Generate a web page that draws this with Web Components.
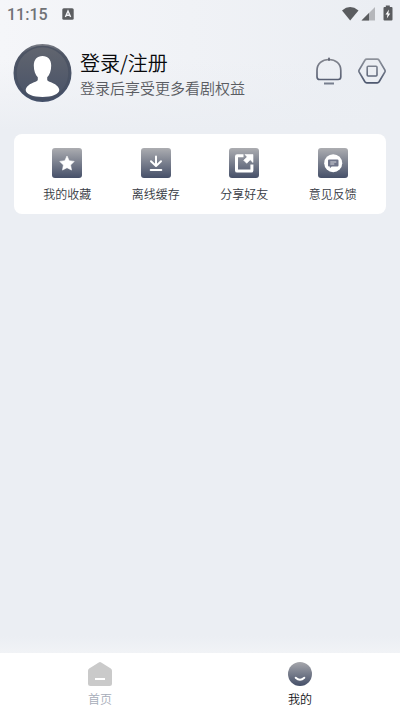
<!DOCTYPE html>
<html lang="zh-CN">
<head>
<meta charset="utf-8">
<meta name="viewport" content="width=device-width, initial-scale=1">
<title>我的</title>
<style>
  body { margin: 0; background: #ebeef3; color: #15171b; font-family: "Noto Sans CJK SC", sans-serif; font-weight: 350; }
</style>
</head>
<body>
<profile-page></profile-page>

<template id="status-bar">
  <style>
    :host { display: flex; align-items: center; height: 28px; padding: 0 7px; color: #707276; }
    time { font-family: Roboto, sans-serif; font-size: 16px; line-height: 20px; font-weight: 500; margin-right: 14px; padding-top: 2px; }
    svg { display: block; }
    .system { display: flex; align-items: center; margin-left: auto; }
  </style>
  <time>11:15</time>
  <svg width="12" height="12" viewBox="0 0 12 12" aria-hidden="true"><rect x=".3" y=".3" width="11.4" height="11.4" rx="1.5" fill="#5c5e61"/><path d="M3.4 9 6 3l2.6 6M4.3 7.2h3.4" fill="none" stroke="#f3f4f7" stroke-width="1.4"/></svg>
  <div class="system">
    <svg width="52" height="18" viewBox="0 0 52 18" aria-hidden="true">
      <path d="M1 5.500Q9 -1.400 17.500 5.500L9.200 15.500Z" fill="#5a5c5f"/>
      <path d="M34 2v13.500H20.500Z" fill="#b5b7bb"/><path d="M28 8V15.500h-7.500Z" fill="#5a5c5f"/>
      <path d="M44.800 2V.500h4V2h1.700q1 0 1 1v11.500q0 1-1 1h-7q-1 0-1-1V3q0-1 1-1Z" fill="#5a5c5f"/>
      <path d="M48 4.500 44.500 9.500h2l-.700 4 3.500-5h-2Z" fill="#fff"/>
    </svg>
  </div>
</template>

<template id="user-header">
  <style>
    :host { display: flex; align-items: center; gap: 8px; padding: 15px 14px 31px 13px; }
    svg { display: block; }
    .login { all: unset; flex: 1; min-width: 0; display: flex; align-items: center; gap: 8px; cursor: pointer; }
    .text { display: flex; flex-direction: column; padding-top: 2px; }
    ::slotted([slot=title]) { font-size: 20px; line-height: 28px; color: #08090b; }
    ::slotted([slot=hint]) { font-size: 15px; line-height: 22px; color: #5a5c62; }
    .actions { display: flex; gap: 15px; padding-bottom: 4px; }
    .actions button { all: unset; cursor: pointer; }
  </style>
  <button class="login" type="button">
    <svg width="59" height="60" viewBox="0 0 59 60" aria-hidden="true">
      <defs><linearGradient id="a" x2="0" y2="1"><stop stop-color="#62666f"/><stop offset="1" stop-color="#485268"/></linearGradient>
      <linearGradient id="r" x2="0" y2="1"><stop stop-color="#777a83"/><stop offset=".15" stop-color="#505766"/><stop offset="1" stop-color="#445069"/></linearGradient></defs>
      <circle cx="29.500" cy="30" r="28" fill="url(#a)" stroke="url(#r)" stroke-width="2"/>
      <circle cx="29.500" cy="30" r="26.500" fill="none" stroke="#464e60" stroke-width="1.500" opacity=".7"/>
      <path d="M29.500 13c5.500 0 8.700 3.800 8.700 9.500 0 5.300-1.600 9.500-4 11.700v2.300c0 1.200.8 1.700 2.300 2.200 5.800 1.900 9.800 5 9.800 8.400 0 4.200-7.500 7-16.800 7s-16.800-2.800-16.800-7c0-3.400 4-6.500 9.800-8.400 1.500-.5 2.300-1 2.300-2.200v-2.300c-2.400-2.200-4-6.400-4-11.700 0-5.700 3.200-9.500 8.700-9.500Z" fill="#fff"/>
    </svg>
    <span class="text"><slot name="title"></slot><slot name="hint"></slot></span>
  </button>
  <div class="actions">
    <button type="button" aria-label="消息">
      <svg width="28" height="30" viewBox="0 0 28 30"><defs><linearGradient id="b" gradientUnits="userSpaceOnUse" x2="0" y2="30"><stop stop-color="#8b8d94"/><stop offset="1" stop-color="#4b546b"/></linearGradient></defs>
      <path d="M2 14.500C2 7.500 7.200 3.500 13.900 3.500s11.900 4 11.900 11v6.300q0 2.700-2.700 2.700H4.700Q2 23.500 2 20.800Z" fill="none" stroke="url(#b)" stroke-width="1.700"/><rect x="13" y="1.500" width="2" height="3.500" rx="1" fill="#646977"/><rect x="9" y="26.500" width="10" height="2" fill="#777e8e"/></svg>
    </button>
    <button type="button" aria-label="设置">
      <svg width="28" height="30" viewBox="0 0 28 30"><defs><linearGradient id="h" gradientUnits="userSpaceOnUse" x2="0" y2="30"><stop stop-color="#969aa1"/><stop offset="1" stop-color="#46516a"/></linearGradient></defs>
      <path d="M8.800 3.200h10.400q1.200 0 1.900 1.100l5.700 9.600q.600 1.100 0 2.200l-5.700 9.600q-.700 1.100-1.900 1.100H8.800q-1.200 0-1.900-1.100L1.200 16.100q-.600-1.100 0-2.200l5.700-9.600q.700-1.100 1.900-1.100Z" fill="none" stroke="url(#h)" stroke-width="1.700"/><rect x="9.200" y="10.200" width="9.800" height="9.800" rx="1" fill="none" stroke="url(#h)" stroke-width="1.600"/></svg>
    </button>
  </div>
</template>

<template id="action-card">
  <style>
    :host { display: grid; grid-template-columns: repeat(4, 1fr); margin: 0 14px; padding: 14px 9px 11px 9px; border-radius: 8px; background: #fff; }
  </style>
  <slot></slot>
</template>

<template id="action-item">
  <style>
    :host { display: block; }
    button { all: unset; display: flex; flex-direction: column; align-items: center; gap: 7px; width: 100%; cursor: pointer; font-size: 12px; line-height: 18px; color: #363a43; }
    svg { display: block; }
  </style>
  <button type="button">
    <svg width="30" height="30" viewBox="0 0 30 30" aria-hidden="true">
      <defs><linearGradient id="g" x2="0" y2="1"><stop stop-color="#acadb1"/><stop offset="1" stop-color="#465069"/></linearGradient></defs>
      <rect width="30" height="30" rx="3" fill="url(#g)"/>
      <g class="glyph"></g>
    </svg>
    <span><slot></slot></span>
  </button>
</template>

<template id="tab-bar">
  <style>
    :host { display: block; position: sticky; bottom: 0; margin-top: auto; }
    .fade { height: 17px; background: linear-gradient(#ebeef3, #f1f3f6); }
    nav { display: grid; grid-template-columns: 1fr 1fr; background: #fff; }
  </style>
  <div class="fade"></div>
  <nav><slot></slot></nav>
</template>

<template id="tab-item">
  <style>
    :host { display: block; color: #a6acb8; }
    :host([current]) { color: #121418; }
    a { display: flex; flex-direction: column; align-items: center; gap: 4px; padding: 9px 0 4px; color: inherit; text-decoration: none; font-size: 12px; line-height: 18px; }
    svg { display: block; }
  </style>
  <a href="#"><svg width="24" height="24" viewBox="0 0 24 24" aria-hidden="true"></svg><span><slot></slot></span></a>
</template>

<template id="profile-page">
  <style>
    :host { display: flex; flex-direction: column; min-height: 100vh; background: linear-gradient(rgba(235,238,243,0) 60px, #ebeef3 130px), linear-gradient(90deg, #f5f6f9, #ebeef3 95%); }
  </style>
  <status-bar></status-bar>
  <user-header><span slot="title">登录/注册</span><span slot="hint">登录后享受更多看剧权益</span></user-header>
  <action-card>
    <action-item icon="star">我的收藏</action-item>
    <action-item icon="download">离线缓存</action-item>
    <action-item icon="share">分享好友</action-item>
    <action-item icon="feedback">意见反馈</action-item>
  </action-card>
  <tab-bar>
    <tab-item icon="home">首页</tab-item>
    <tab-item icon="face" current>我的</tab-item>
  </tab-bar>
</template>

<script>
  const glyphs = {
    star: '<path d="m15 8 2.200 4.700 5 .700-3.600 3.600.900 5.100L15 19.700l-4.500 2.400.900-5.100-3.600-3.600 5-.700Z" fill="#fff" stroke="#fff" stroke-width=".6" stroke-linejoin="round"/>',
    download: '<path d="M15 8.500v9M10 13.200l5 4.800 5-4.800M9.700 22h10.600" fill="none" stroke="#fff" stroke-width="2" stroke-linecap="round" stroke-linejoin="round"/>',
    share: '<path d="M14.500 7.700H8.200q-.700 0-.700.700v14q0 .700.700.700h14q.700 0 .700-.700v-6" fill="none" stroke="#fff" stroke-width="3"/><path d="M16 6.500h8v8l-2.800-2.700-3.500 3.500-3-3 3.500-3.400Z" fill="#fff" stroke="#fff" stroke-width=".6" stroke-linejoin="round"/>',
    feedback: '<circle cx="15.200" cy="15.200" r="9" fill="#fff"/><path d="M11 11.500h8.500q1 0 1 1v5q0 1-1 1h-5.800l-1.800 1.700v-1.700H11q-1 0-1-1v-5q0-1 1-1Z" fill="#70758a"/><path d="M12.300 14h6M12.300 16h4" stroke="#d5d7dc" stroke-width="1"/>'
  };
  const tabIcons = {
    home: '<path d="M10.800.500q1.200-.800 2.400 0L22.800 6.500Q24 7.300 24 8.700V21.500q0 2.500-2.500 2.500h-19Q0 24 0 21.500V8.700Q0 7.300 1.200 6.500Z" fill="#cacaca"/><rect x="7" y="16" width="10" height="2" fill="#fff"/>',
    face: '<defs><linearGradient id="f" x2="0" y2="1"><stop stop-color="#a6a7ac"/><stop offset="1" stop-color="#454f68"/></linearGradient></defs><circle cx="12" cy="12" r="12" fill="url(#f)"/><path d="M7.700 15.700q4.300 4.100 8.600 0" fill="none" stroke="#fff" stroke-width="2" stroke-linecap="round"/>'
  };
  class TemplateElement extends HTMLElement {
    constructor() {
      super();
      this.attachShadow({ mode: 'open' }).append(document.getElementById(this.localName).content.cloneNode(true));
    }
  }
  class ActionItem extends TemplateElement {
    connectedCallback() { this.shadowRoot.querySelector('.glyph').innerHTML = glyphs[this.getAttribute('icon')]; }
  }
  class TabItem extends TemplateElement {
    connectedCallback() {
      this.shadowRoot.querySelector('svg').innerHTML = tabIcons[this.getAttribute('icon')];
      if (this.hasAttribute('current')) this.shadowRoot.querySelector('a').setAttribute('aria-current', 'page');
    }
  }
  customElements.define('status-bar', class extends TemplateElement {});
  customElements.define('user-header', class extends TemplateElement {});
  customElements.define('action-card', class extends TemplateElement {});
  customElements.define('tab-bar', class extends TemplateElement {});
  customElements.define('action-item', ActionItem);
  customElements.define('tab-item', TabItem);
  customElements.define('profile-page', class extends TemplateElement {});
</script>
</body>
</html>
